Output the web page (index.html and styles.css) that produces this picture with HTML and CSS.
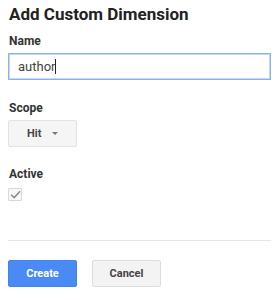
FILE: index.html
```html
<!DOCTYPE html>
<html lang="en">
<head>
    <meta charset="UTF-8">
    <title>Add Custom Dimension</title>
    <link rel="stylesheet" href="styles.css">
</head>
<body>
    <div class="dialog">
        <h3 class="title">Add Custom Dimension</h3>

        <div class="field">
            <label class="label" for="name">Name</label>
            <div class="textbox"><span class="value">author</span><span class="caret"></span></div>
        </div>

        <div class="field">
            <div class="label">Scope</div>
            <button type="button" class="select">Hit <span class="arrow"></span></button>
        </div>

        <div class="field">
            <div class="label">Active</div>
            <span class="check">
                <svg width="11" height="9" viewBox="0 0 11 9"><path d="M1 4.8 L4.2 7.6 L10 1.2" fill="none" stroke="#8a8a8a" stroke-width="1.5"/></svg>
            </span>
        </div>

        <div class="divider"></div>

        <div class="actions">
            <button type="button" class="btn btn-primary">Create</button>
            <button type="button" class="btn">Cancel</button>
        </div>
    </div>
</body>
</html>
```

FILE: styles.css
```css
/* General */
body {
    margin: 0;
    font-family: Roboto, "Liberation Sans", Arial, sans-serif;
    color: #333;
    background: #fff;
}

.dialog {
    display: flex;
    flex-direction: column;
    padding: 3px 9px 0 8px;
}

.title {
    margin: 0 0 0 1px;
    font-size: 17px;
    font-weight: bold;
    color: #222;
    line-height: 22px;
}

.field {
    margin-top: 8px;
}

.label {
    display: block;
    margin-left: 1px;
    font-size: 12px;
    font-weight: bold;
    color: #333;
    line-height: 16px;
}

/* Name input */
.textbox {
    display: flex;
    align-items: center;
    height: 25px;
    margin-top: 4px;
    margin-bottom: 12px;
    padding: 0 9px;
    border: 1px solid #8ab0f0;
    box-shadow: 0 0 0 1px #c5d7f8 inset;
    font-size: 13px;
    color: #444;
}

.caret {
    display: inline-block;
    width: 1px;
    height: 15px;
    background: #222;
}

/* Scope dropdown */
.select {
    display: flex;
    align-items: center;
    gap: 11px;
    width: 69px;
    height: 27px;
    margin-top: 4px;
    margin-bottom: 11px;
    padding: 0 0 0 18px;
    border: 1px solid #e2e2e2;
    border-radius: 2px;
    background: #f5f5f5;
    font-family: inherit;
    font-size: 11px;
    font-weight: bold;
    color: #444;
}

.arrow {
    width: 0;
    height: 0;
    border-left: 3px solid transparent;
    border-right: 3px solid transparent;
    border-top: 3px solid #777;
}

/* Active checkbox */
.check {
    display: flex;
    align-items: center;
    justify-content: center;
    width: 12px;
    height: 11px;
    margin-top: 6px;
    border: 1px solid #d8d8d8;
    border-radius: 1px;
    background: #f8f8f8;
}

.divider {
    height: 1px;
    margin-top: 39px;
    background: #e5e5e5;
}

/* Buttons */
.actions {
    display: flex;
    gap: 15px;
    margin-top: 19px;
}

.btn {
    width: 69px;
    height: 27px;
    border: 1px solid #dcdcdc;
    border-radius: 2px;
    background: #f3f3f3;
    font-family: inherit;
    font-size: 11px;
    font-weight: bold;
    color: #444;
}

.btn-primary {
    border-color: #3f83ec;
    background: #4a8af4;
    color: #fff;
}
```
